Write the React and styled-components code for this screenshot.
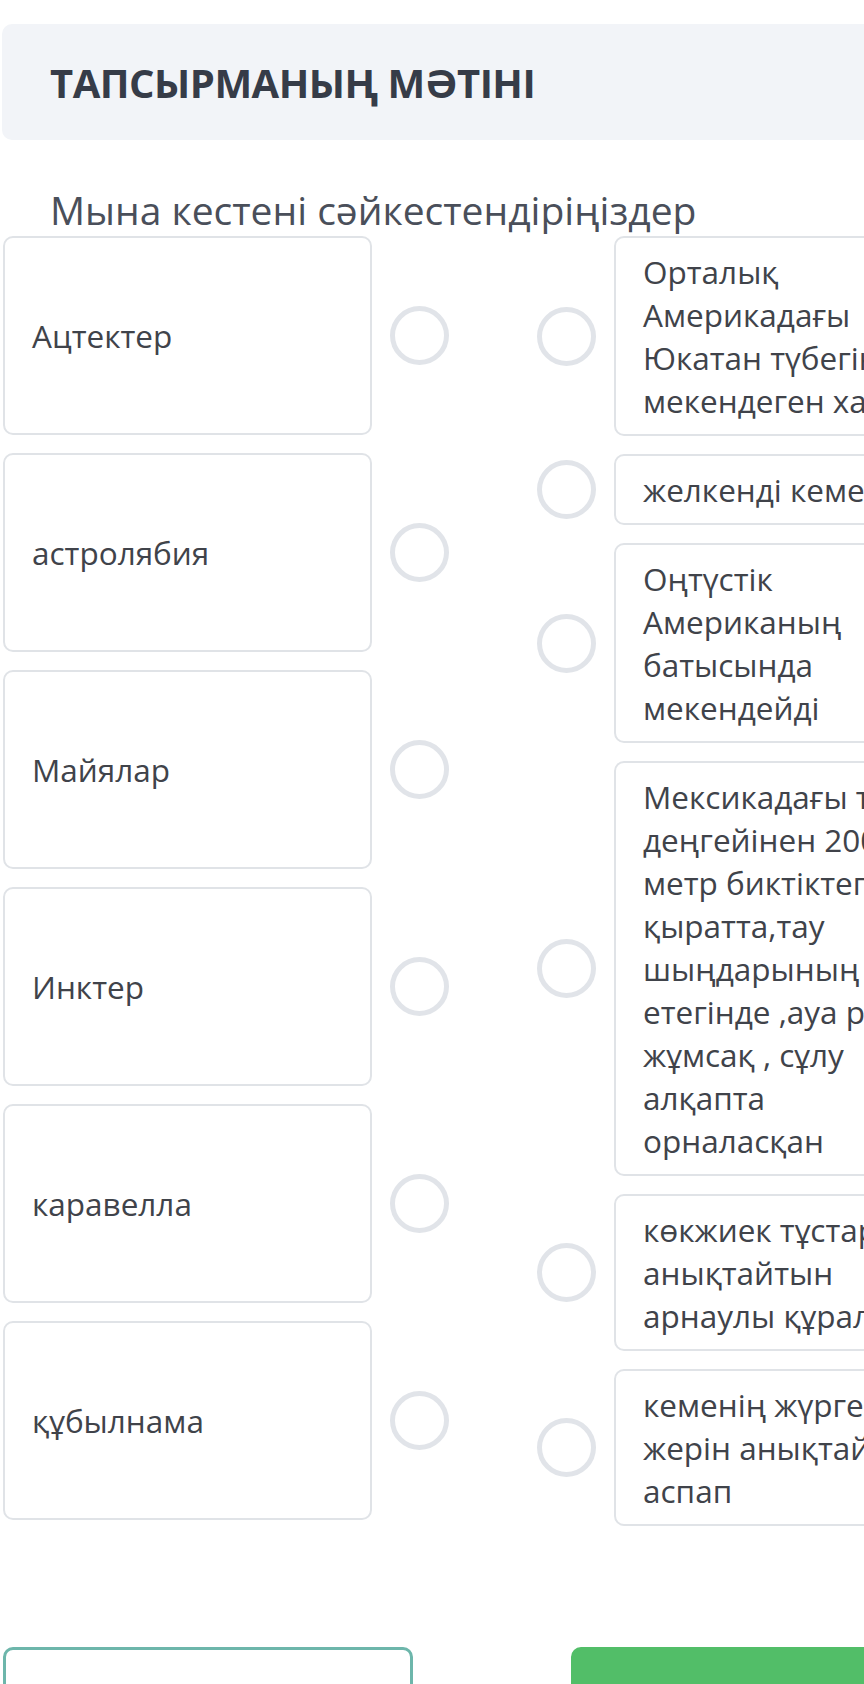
import styled, { createGlobalStyle } from "styled-components";

const GlobalStyle = createGlobalStyle`
    html, body {
        margin: 0;
        padding: 0;
        overflow: hidden;
        background: #ffffff;
    }
    body {
        font-family: "Open Sans", "Noto Sans", sans-serif;
        color: #40434a;
    }
`;

const Page = styled.div`
    width: 984px;
    padding-left: 2px;
    padding-top: 24px;
`;

const TaskHeader = styled.div`
    height: 116px;
    display: flex;
    align-items: center;
    padding: 0 48px;
    background-color: #f2f4f8;
    border-radius: 10px;
`;

const TaskTitle = styled.h1`
    margin: 0;
    font-size: 40px;
    font-weight: 700;
    color: #363c48;
    letter-spacing: -0.5px;
`;

const Question = styled.div`
    margin: 44px 0 0 48px;
    height: 52px;
    line-height: 52px;
    font-size: 39px;
    color: #4a4f5a;
`;

const Board = styled.div`
    display: flex;
    gap: 88px;
    padding-left: 1px;
`;

const Column = styled.div`
    display: flex;
    flex-direction: column;
    gap: 18px;
`;

const Item = styled.div`
    display: flex;
    align-items: center;
    gap: 18px;
`;

const Card = styled.div`
    box-sizing: border-box;
    width: 369px;
    min-height: ${p => (p.$fixed ? "199px" : "0")};
    display: flex;
    align-items: center;
    padding: 12px 27px;
    border: 2px solid #e0e3e7;
    border-radius: 10px;
    background: #fff;
    font-size: 31.5px;
    line-height: 43px;
    white-space: pre-line;
`;

const RightCard = styled(Card)`
    white-space: pre;
    overflow: hidden;
`;

const Dot = styled.span`
    box-sizing: border-box;
    flex: none;
    width: 59px;
    height: 59px;
    border: 5px solid #e1e4e9;
    border-radius: 50%;
`;

const ButtonRow = styled.div`
    display: flex;
    gap: 158px;
    margin-top: 121px;
    padding-left: 1px;
`;

const Button = styled.button`
    width: 410px;
    height: 90px;
    border-radius: 10px;
    border: 3px solid ${p => (p.$primary ? "#52be68" : "#6db6ab")};
    background: ${p => (p.$primary ? "#52be68" : "#fff")};
`;

const terms = ["Ацтектер", "астролябия", "Майялар", "Инктер", "каравелла", "құбылнама"];

const definitions = [
    "Орталық\nАмерикадағы\nЮкатан түбегін\nмекендеген халық",
    "желкенді кеме",
    "Оңтүстік\nАмериканың\nбатысында\nмекендейді",
    "Мексикадағы теңіз\nдеңгейінен 2000\nметр биктіктегі\nқыратта,тау\nшыңдарының\nетегінде ,ауа райы\nжұмсақ , сұлу\nалқапта\nорналасқан",
    "көкжиек тұстарын\nанықтайтын\nарнаулы құрал",
    "кеменің жүрген\nжерін анықтайтын\nаспап",
];

const App = () => {
    return (
        <>
            <GlobalStyle />
            <Page>
                <TaskHeader>
                    <TaskTitle>{"ТАПСЫРМАНЫҢ МӘТІНІ"}</TaskTitle>
                </TaskHeader>
                <Question>{"Мына кестені сәйкестендіріңіздер"}</Question>
                <Board>
                    <Column>
                        {terms.map(t => (
                            <Item key={t}>
                                <Card $fixed>{t}</Card>
                                <Dot />
                            </Item>
                        ))}
                    </Column>
                    <Column>
                        {definitions.map(d => (
                            <Item key={d}>
                                <Dot />
                                <RightCard>{d}</RightCard>
                            </Item>
                        ))}
                    </Column>
                </Board>
                <ButtonRow>
                    <Button />
                    <Button $primary />
                </ButtonRow>
            </Page>
        </>
    );
};

export default App;
